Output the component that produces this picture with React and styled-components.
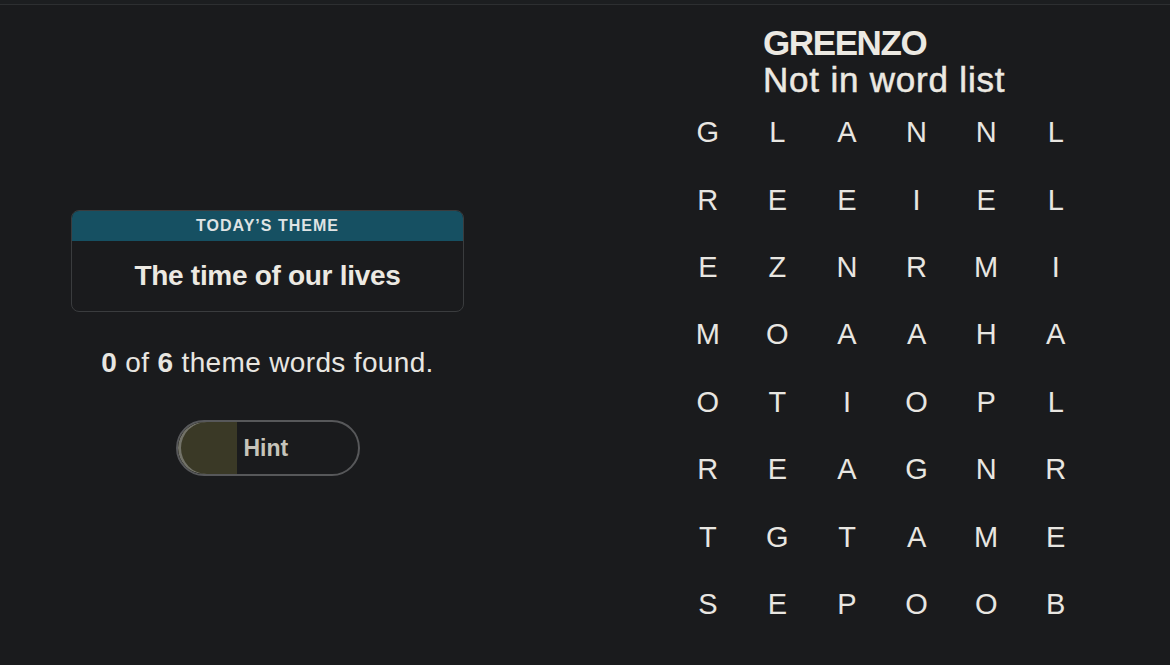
import React from "react";
import styled, { createGlobalStyle } from "styled-components";

const GlobalStyle = createGlobalStyle`
  body {
    margin: 0;
    background: #1a1b1d;
    font-family: "Liberation Sans", Arial, sans-serif;
    color: #e8e6e1;
  }
`;

const board = [
  "GLANNL",
  "REEIEL",
  "EZNRMI",
  "MOAAHA",
  "OTIOPL",
  "REAGNR",
  "TGTAME",
  "SEPOOB"
];

const TopRule = styled.div`
  height: 4px;
  background: #1c1e20;
  border-bottom: 1px solid #2d2f31;
`;

const Page = styled.main`
  display: flex;
  height: 660px;
`;

const LeftPanel = styled.section`
  width: 535px;
  padding-top: 205px;
  display: flex;
  flex-direction: column;
  align-items: center;
`;

const ThemeCard = styled.div`
  width: 391px;
  border: 1px solid #3a3c3e;
  border-radius: 8px;
  overflow: hidden;
`;

const ThemeHeader = styled.div`
  height: 30px;
  background: #165062;
  display: flex;
  align-items: center;
  justify-content: center;
  font-size: 16px;
  font-weight: 700;
  letter-spacing: 1px;
  color: #dfe3e4;
`;

const ThemeTitle = styled.div`
  height: 70px;
  display: flex;
  align-items: center;
  justify-content: center;
  font-size: 28px;
  font-weight: 700;
  letter-spacing: -0.3px;
  color: #ece9e2;
`;

const Progress = styled.p`
  margin: 35px 0 0;
  font-size: 28px;
  line-height: 32px;
  letter-spacing: 0.35px;
  color: #e8e6e1;

  b {
    font-weight: 700;
  }
`;

const HintButton = styled.button`
  margin-top: 41px;
  box-sizing: border-box;
  width: 184px;
  height: 56px;
  padding: 0;
  border: 2px solid #57585a;
  border-radius: 28px;
  background: transparent;
  overflow: hidden;
  display: flex;
  align-items: stretch;
  font-family: inherit;
  cursor: pointer;
`;

const HintFill = styled.span`
  width: 59px;
  background: #3a3926;
  box-shadow: inset 3px 0 0 #727268;
  border-radius: 26px 0 0 26px;
`;

const HintLabel = styled.span`
  display: flex;
  align-items: center;
  padding-left: 7px;
  font-size: 23px;
  font-weight: 700;
  color: #c6c4ba;
`;

const RightPanel = styled.section`
  margin-left: 138px;
  padding-top: 19px;
  display: flex;
  flex-direction: column;
`;

const Status = styled.div`
  margin-left: 90px;
  margin-bottom: 1px;
  font-size: 35px;
  line-height: 37px;
  color: #ece9e2;
`;

const Word = styled.div`
  font-weight: 700;
  letter-spacing: -1.4px;
`;

const Message = styled.div`
  font-weight: 400;
  letter-spacing: 0.8px;
  -webkit-text-stroke: 0.5px #ece9e2;
`;

const LetterGrid = styled.div`
  display: grid;
  grid-template-columns: repeat(6, 69.6px);
  grid-auto-rows: 67.4px;
`;

const Letter = styled.span`
  display: flex;
  align-items: center;
  justify-content: center;
  font-size: 29px;
  color: #e8e6e1;
`;

export default function App() {
  return (
    <>
      <GlobalStyle />
      <TopRule />
      <Page>
        <LeftPanel>
          <ThemeCard>
            <ThemeHeader>TODAY’S THEME</ThemeHeader>
            <ThemeTitle>The time of our lives</ThemeTitle>
          </ThemeCard>
          <Progress>
            <b>0</b> of <b>6</b> theme words found.
          </Progress>
          <HintButton>
            <HintFill />
            <HintLabel>Hint</HintLabel>
          </HintButton>
        </LeftPanel>
        <RightPanel>
          <Status>
            <Word>GREENZO</Word>
            <Message>Not in word list</Message>
          </Status>
          <LetterGrid>
            {board.map((row, r) =>
              row.split("").map((ch, c) => <Letter key={r + "-" + c}>{ch}</Letter>)
            )}
          </LetterGrid>
        </RightPanel>
      </Page>
    </>
  );
}
